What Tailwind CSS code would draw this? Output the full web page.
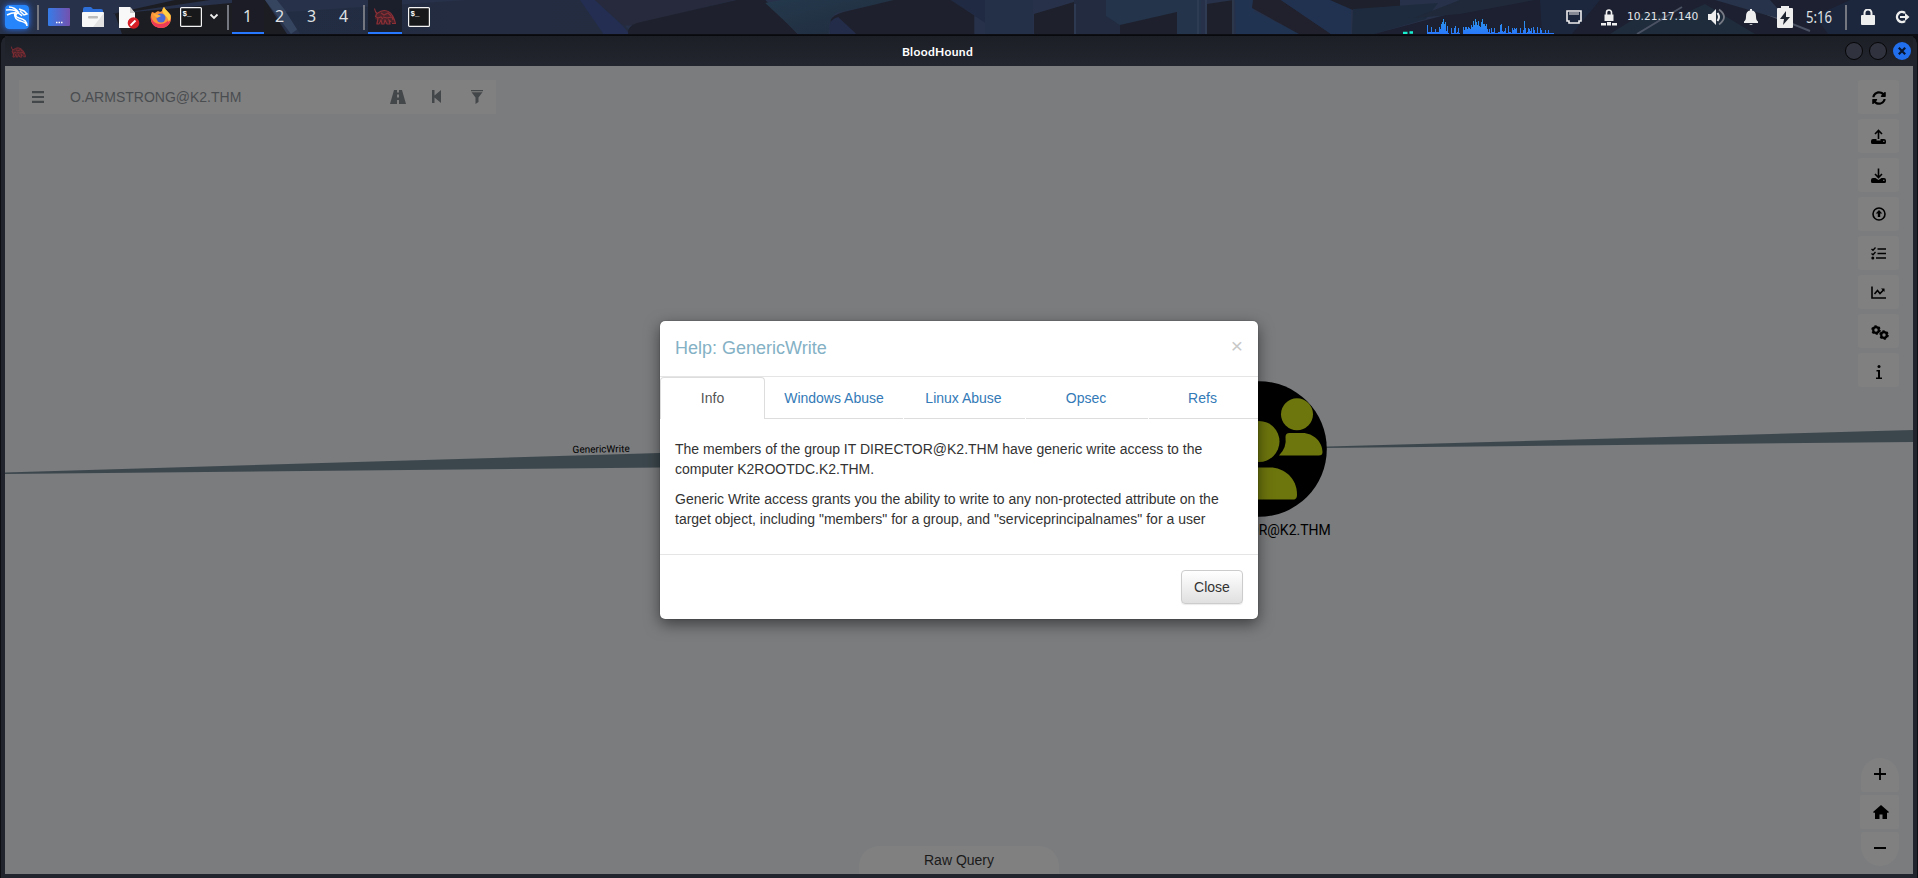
<!DOCTYPE html>
<html lang="en">
<head>
<meta charset="utf-8">
<title>BloodHound</title>
<script src="https://cdn.jsdelivr.net/npm/@tailwindcss/browser@4"></script>
</head>
<body class="w-[1918px] h-[878px] overflow-hidden bg-[#0d0e13] font-['Liberation_Sans',sans-serif] text-sm">
<svg class="hidden">
  <symbol id="hound" viewBox="0 0 22 17"><path d="M1 1.500c1 1.500 1 3 2.500 3.500C5 4 8 2 11 2.500c5 .5 8 5 9.500 9.500l.5 3.500h-3L16 13l-2 3h-3l1-3-2 .5-1 3H6l1-3-2-.5-1 3H2l1-4-2-1 1-4-1-3z" fill="#6d262c" opacity=".55"/><path d="M.5.500Q1 4 3 5.500C5 4 8 2 11 2.500c5 .5 8 5 9.500 9.500l1 3.500h-3.500M2.500 6L1.500 8.500 4 10l3-1 2 2M7 5l3 2 4-2 3 3M9 9l4 1 5-1 1 3M4 10l-1 6h2l2-4 1 4h2l1-4 2 4h3l-1-4 2 2" fill="none" stroke="#8e2f36" stroke-width="1.100"/></symbol>
  <symbol id="term" viewBox="0 0 22 20"><rect x=".6" y=".6" width="20.8" height="18.8" rx="1" fill="#17181a" stroke="#f4f4f4" stroke-width="1.2"/><text x="2.5" y="9" font-family="Liberation Mono" font-weight="bold" font-size="7.5" fill="#fff">$_</text></symbol>
</svg>
<div class="flex flex-col h-full">
  <!-- desktop panel -->
  <header class="relative h-[34px] shrink-0 bg-[#1f2a3f] overflow-hidden">
    <svg class="absolute inset-0" width="1918" height="34">
      <defs><linearGradient id="lg"><stop offset="0" stop-color="#222c42"/><stop offset="1" stop-color="#242c40"/></linearGradient>
      <linearGradient id="cy" x1="0" x2="1" y2="1"><stop offset="0" stop-color="#24394c"/><stop offset="1" stop-color="#202b3d"/></linearGradient></defs>
      <rect width="1918" height="34" fill="#273149"/>
      <path d="M112 14L265 0h-90zM115 14L210 0h55l22 34H122z" fill="#1c1d23"/>
      <path d="M265 0h12l22 28-8 6z" fill="#35445f"/>
      <path d="M300 34L286 12l180-12h140l26 34z" fill="url(#lg)"/>
      <g transform="translate(-32.860) scale(1.0714 1)">
      <path d="M572 0h14l26 26 6 8h-24z" fill="#232e52"/>
      <path d="M586 0h130L625 24q-10 3-14 0z" fill="#272a3c"/>
      <path d="M617 34V30q2-6 12-8L718 0h27l30 34z" fill="#1e212d"/>
      <path d="M745 3L760 0h110l-56 12q-10 2-10 22h-28z" fill="url(#cy)"/>
      <path d="M806 34V20q2-5 12-8L865 0h75v34z" fill="#1e212d"/><path d="M806 34q-4-14 7-17l17 17z" fill="#232c48"/>
      <path d="M918 0h60v34h-12z" fill="#202a42"/>
      </g>
      <path d="M985 0h48v34h-48z" fill="#243048"/>
      <path d="M1034 14l40-12v32h-40z" fill="#1e202b"/>
      <path d="M1074 0h34l9 24h3v10h-46z" fill="#222b40"/>
      <path d="M1106 0h95v34h-24V12l-57 13-14-9z" fill="#24344a"/>
      <path d="M1120 25l57-13v22h-57z" fill="#1e212d"/>
      <path d="M1207 4l27-4v34h-27z" fill="#1e202b"/><path d="M1198 0v34M1206 0v34M1233 0v34M1075 4v30" stroke="#323f57" stroke-width="1.5"/>
      <path d="M1235 0h20l-3 34h-16zM1250 9l50 25h-50z" fill="#203350"/>
      <path d="M1253 0h28l50 34h-32l-47-26z" fill="#20212d"/>
      <path d="M1281 0h50l20 9v25h-20z" fill="#203250"/><path d="M1330 0h70v6l-47 4z" fill="#1e202b"/>
      <path d="M1353 9l85-6-12 16-52 15h-22z" fill="#1e2b3e"/>
      <path d="M1374 34l90-24L1500 0h418v34z" fill="#1d2030"/>
      <path d="M1460 0h75l-75 14-46 4z" fill="#1f293a"/>
      <path d="M1540 0h60l-28 34h-30zM1815 16l35-16h68v34h-90z" fill="#1c273d"/>
      <path d="M1610 34l35-22 30 6 30-14 50 30z" fill="#1f2c3c"/><path d="M1732 0l78 31M1682 7l-45 27" stroke="#4a5263" stroke-width="2"/>
      <path d="M1715 0h55l18 20-22-5z" fill="#26334a"/>
    </svg>
    <div class="relative flex h-full items-center">
      <svg class="ml-[5px] mb-px rounded-sm shadow-[0_0_6px_#2777ff]" width="24" height="24"><rect width="24" height="24" rx="2" fill="#2685fa"/><path d="M1 5c6-1 10 0 13 3M2 10c6-3 12-3 15 1M4 2c5 0 8 3 10 6m-1 0c-3 1-3 4 1 5 5 1 8 3 8 8 0-4-5-4-9-6-4-2-4-6-2-8M15 6l4 4 3-1-3-3-5-2" fill="none" stroke="#fff" stroke-width="1.5"/></svg>
      <i class="ml-2 h-[25px] w-0.5 bg-[#74777f]"></i>
      <svg class="ml-[9px]" width="22" height="18"><defs><linearGradient id="dk"><stop stop-color="#367ce8"/><stop offset="1" stop-color="#7451ae"/></linearGradient></defs><rect width="22" height="18" rx="1" fill="url(#dk)"/><path d="M8 14.5h1.5m1 0H12m1 0h1.5" stroke="#fff" stroke-width="1.5"/></svg>
      <svg class="ml-3" width="22" height="22"><path d="M1 3q0-2 2-2h6l2 2h8q2 0 2 2v4H1z" fill="#2d6fd6"/><rect y="6" width="22" height="15" rx="1" fill="#f7f7f7"/><path d="M22 7v14H11z" fill="#e2e2e2"/><rect x="6" y="10" width="10" height="2.5" rx="1" fill="#bbb"/></svg>
      <svg class="ml-[14px]" width="22" height="23"><path d="M1 1h11l5 6v15H1z" fill="#f8f8f8"/><path d="M12 1v6h5z" fill="#ccc"/><circle cx="15.500" cy="17" r="5.800" fill="#d61f26"/><path d="M12.500 19.500l5-5" stroke="#fff" stroke-width="2"/></svg>
      <svg class="ml-[10px]" width="22" height="23"><path d="M14 1c1 3 5 5 6.500 8 2 6-2 13-9.500 13S-.5 16 1 9c0-1 1-3 1-3l3 1c2-2 4-2 5-1l2-1c0-2 1-3 2-4z" fill="#f9943a"/><path d="M1 9c0 5 4 9 9 9s9-3 10-8c2 6-2 12-9 12S0 17 1 9z" fill="#ed3b57"/><path d="M14 1c1 3 5 5 6.500 8 .5 3 0 5-2 7 0-6-5-6-6-11 0-2 1-3 1.500-4z" fill="#ffcf45"/><circle cx="11" cy="12" r="4.500" fill="#4a6ad7"/><path d="M3 8l6 1 2 1-4 2z" fill="#ffb53d"/></svg>
      <svg class="ml-[8px]" width="22" height="20"><use href="#term"/></svg>
      <svg class="ml-[7px]" width="10" height="8"><path d="M1.500 1.500L5 5l3.500-3.500" fill="none" stroke="#eee" stroke-width="1.800"/></svg>
      <i class="ml-2 h-[25px] w-0.5 bg-[#74777f]"></i>
      <nav class="ml-[3px] flex h-full text-center font-['Noto_Sans',sans-serif] text-[16px] leading-[32px] text-[#dfe1e4]">
        <div class="w-8 border-b-2 border-[#2777ff] bg-[#1b1c25] pr-px">1</div><div class="w-8 pr-px">2</div><div class="w-8 pr-px">3</div><div class="w-8 pr-px">4</div>
      </nav>
      <i class="ml-[3px] h-[25px] w-0.5 bg-[#74777f]"></i>
      <div class="ml-[3px] flex h-full w-[34px] items-center justify-center border-b-2 border-[#2777ff] bg-[#1b1f2c]"><svg width="22" height="17"><use href="#hound"/></svg></div>
      <svg class="ml-[6px]" width="22" height="20"><use href="#term"/></svg>
      <svg class="ml-[973px]" width="155" height="34"><defs><linearGradient id="bg" gradientUnits="userSpaceOnUse" x1="0" y1="18" x2="0" y2="34"><stop stop-color="#2b98e8"/><stop offset="1" stop-color="#2a78fb"/></linearGradient></defs><path d="M0 33h4.500M6.500 32.500h3.500" stroke="#18f0d0" stroke-width="2.500"/>
        <g id="bars" fill="url(#bg)"></g></svg>
      <svg class="ml-[8px]" width="16" height="15"><path d="M1 1h14v10h-2v2H3v-2H1z" fill="none" stroke="#eee" stroke-width="1.600"/><path d="M4 2v3m2-3v3m2-3v3m2-3v3m2-3v3" stroke="#eee"/></svg>
      <svg class="ml-[19px]" width="16" height="17" fill="#eee"><path d="M3.500 5.500h9V12h-9zM0 14h5v2.500H0zM6 13h4v3.500H6zM11 14h5v2.500h-5z"/><path d="M5.500 6V3.500a2.500 2.500 0 015 0V6" fill="none" stroke="#eee" stroke-width="1.600"/></svg>
      <span class="ml-[10px] w-[72px] whitespace-nowrap font-['DejaVu_Sans',sans-serif] text-[10.7px] text-[#e4e6ea]">10.21.17.140</span>
      <svg class="ml-[9px]" width="18" height="18"><path d="M0 6h3l5-5v16l-5-5H0z" fill="#eee"/><path d="M9.500 5q3 4 0 8" fill="none" stroke="#eee" stroke-width="2"/><path d="M11 1.500q10 7.500 0 15" fill="none" stroke="#767a84" stroke-width="1.800"/></svg>
      <svg class="ml-[18px]" width="14" height="16" fill="#eee"><path d="M6 0h2v1.500q4 .5 4 6 0 4 2 5V14H0v-1.500q2-1 2-5 0-5.500 4-6zM5 15h4l-2 1z"/></svg>
      <svg class="ml-[19px]" width="16" height="22"><path d="M4 0h8v2h3q1 0 1 1v18q0 1-1 1H1q-1 0-1-1V3q0-1 1-1h3z" fill="#eee"/><path d="M9 5l-6 8h4l-1 6 7-8H9z" fill="#1e2330"/></svg>
      <span class="ml-[13px] w-[26px] whitespace-nowrap font-['Noto_Sans',sans-serif] text-[16px]"><span class="inline-block origin-left scale-x-[.82] text-[#dfe1e4]">5:16</span></span>
      <i class="ml-[13px] h-[25px] w-0.5 bg-[#74777f]"></i>
      <svg class="ml-[14px]" width="14" height="16"><path d="M1 6h12q1 0 1 1v8q0 1-1 1H1q-1 0-1-1V7q0-1 1-1z" fill="#eee"/><path d="M3.500 7V4a3.500 3.500 0 017 0v3" fill="none" stroke="#eee" stroke-width="2"/></svg>
      <svg class="ml-[20px]" width="15" height="14"><path d="M10 3a5 5 0 100 8" fill="none" stroke="#eee" stroke-width="2.400"/><path d="M5 6h5V3l4.500 4-4.500 4V8H5z" fill="#eee"/></svg>
    </div>
  </header>
  <!-- application window -->
  <main class="mx-px mt-px flex min-h-0 flex-1 flex-col rounded-t-lg border-t border-[#08090c] bg-[#22242d] px-1 pb-1">
    <div class="flex h-[30px] shrink-0 items-center bg-gradient-to-b from-[#1d1f27] to-[#23252e] px-1.5">
      <svg class="mt-px" width="15" height="12"><use href="#hound"/></svg>
      <h1 class="flex-1 pl-[4px] text-center font-['Lato',sans-serif] text-[12px] font-bold leading-[29px] tracking-[.35px] text-white">BloodHound</h1>
      <div class="mr-[-4px] flex gap-[6px]">
        <i class="size-[18px] rounded-full border border-[#050507] bg-[#30333e]"></i>
        <i class="size-[18px] rounded-full border border-[#050507] bg-[#30333e]"></i>
        <svg width="18" height="18"><circle cx="9" cy="9" r="9" fill="#226fed"/><path d="M5.800 5.800l6.400 6.400m0-6.400l-6.400 6.400" stroke="#07152e" stroke-width="2.200"/></svg>
      </div>
    </div>
    <div class="relative min-h-0 flex-1 overflow-hidden bg-[#7a7c7e]">
      <svg class="absolute inset-0" width="1908" height="807" viewBox="5 66 1908 807">
        <path d="M5 472.500L660 453v14.500L5 474z" fill="#3c474d"/>
        <path d="M1320 446.800L1913 430v12l-593 6z" fill="#3c474d"/>
        <text x="572.600" y="453" transform="rotate(-1 572 453)" font-family="Roboto" font-size="10" fill="#000">GenericWrite</text>
        <circle cx="1259" cy="449" r="67.800" fill="#000"/>
        <g fill="#6d760d"><circle cx="1259" cy="441.500" r="20.500"/><circle cx="1297" cy="414.300" r="16"/><circle cx="1221" cy="414.300" r="16"/>
        <path d="M1221 495c0-17 13-27.500 27-27.500h22c14 0 27 10.500 27 27 0 3-1 5-4 5h-68c-3 0-4-1-4-4.500z"/>
        <path d="M1285.500 437q0-4 4-4h13c11 0 20 9 20 19 0 2.500-1 3.500-4 3.500h-39.500q8-8 6.500-18.500z"/></g>
        <text x="1259" y="535" text-anchor="middle" font-family="Roboto" font-size="14" fill="#000">IT DIRECTOR@K2.THM</text>
      </svg>
      <div class="absolute left-[14px] top-[14px] flex h-[34px] w-[477px] items-center bg-[#808080] text-[#4a4d50]">
        <svg class="ml-[13px] mb-px" width="12" height="12"><path d="M0 1.200h12M0 6h12M0 10.800h12" stroke="#44474a" stroke-width="2.200"/></svg>
        <span class="ml-[26px] w-[320px]">O.ARMSTRONG@K2.THM</span>
        <svg class="mb-px" width="16" height="14" fill="#44474a"><path d="M4 0h3v2.500h2V0h3l4 14H9v-4H7v4H0zM7 4.500v3h2v-3z" fill-rule="evenodd"/></svg>
        <svg class="ml-[26px] mb-px" width="9" height="13" fill="#44474a"><path d="M0 0h2.500v5.500L9 0v13L2.500 7.500V13H0z"/></svg>
        <svg class="ml-[30px] mb-px" width="12" height="14" fill="#44474a"><path d="M0 0h12v1.200H0zM.5 2.200h11L7.500 7.500V12L4.500 14V7.500z"/></svg>
      </div>
      <div class="absolute right-[14px] top-[14px] flex flex-col gap-[5px] [&>div]:flex [&>div]:h-[34px] [&>div]:w-[41px] [&>div]:items-center [&>div]:justify-center [&>div]:rounded-[3px] [&>div]:bg-[#808080]">
        <div><svg class="mt-0.5" width="14" height="14" viewBox="0 0 512 512"><path d="M370.700 133.300C339.500 104 298.900 88 255.800 88c-77.500.1-144.300 53.200-162.800 126.900-1.300 5.400-6.100 9.100-11.700 9.100H24.100c-7.500 0-13.200-6.800-11.800-14.200C33.900 94.900 134.800 8 256 8c66.400 0 126.800 26.100 171.300 68.700L463 41c15.100-15.100 41-4.400 41 17v134c0 13.300-10.700 24-24 24H346c-21.400 0-32.100-25.900-17-41zM32 296h134c21.400 0 32.100 25.900 17 41l-41.800 41.800c31.300 29.300 71.800 45.300 114.900 45.200 77.400-.1 144.300-53.100 162.800-126.800 1.300-5.400 6.100-9.100 11.700-9.100h57.300c7.500 0 13.200 6.800 11.800 14.200C478.100 417.100 377.200 504 256 504c-66.400 0-126.800-26.100-171.300-68.700L49 471c-15.100 15.100-41 4.400-41-17V320c0-13.300 10.700-24 24-24z"/></svg></div>
        <div><svg class="mt-px" width="15" height="15"><path d="M7.500 10V1.500M4 5l3.500-3.500L11 5" fill="none" stroke="#000" stroke-width="1.600"/><path d="M0 12q0-2 2-2h3.500v1.500h4V10H13q2 0 2 2v1.500q0 1.500-1.500 1.500h-12Q0 15 0 13.500z"/><path d="M12 12.300h1.500" stroke="#808080"/></svg></div>
        <div><svg class="mt-px" width="15" height="15"><path d="M7.500 .5V9M4 6l3.500 3.500L11 6" fill="none" stroke="#000" stroke-width="1.600"/><path d="M0 12q0-2 2-2h2.500l3 2 3-2H13q2 0 2 2v1.500q0 1.500-1.500 1.500h-12Q0 15 0 13.500z"/><path d="M12 12.300h1.500" stroke="#808080"/></svg></div>
        <div><svg width="14" height="14"><circle cx="7" cy="7" r="6" fill="none" stroke="#000" stroke-width="1.600"/><path d="M7 3l3.300 3.500H8.200V10H5.800V6.500H3.700z"/></svg></div>
        <div><svg class="mt-px" width="15" height="13"><path d="M6.500 2H15M6.500 6.500H15M5 11h10" stroke="#000" stroke-width="1.600"/><path d="M.5 2l1.500 1.300L4.500.5M.5 6.500L2 7.800 4.500 5" fill="none" stroke="#000" stroke-width="1.300"/><circle cx="1.800" cy="11" r="1.500"/></svg></div>
        <div><svg class="mt-px" width="15" height="13"><path d="M1 .5V12h14M3.500 8L6.500 4.500l2.500 3L13 3.500" fill="none" stroke="#000" stroke-width="1.600"/><path d="M10 2.500h3.500V6z"/></svg></div>
        <div><svg class="ml-[3px] mt-0.5" width="18" height="15"><circle cx="5" cy="5" r="2.800" fill="none" stroke="#000" stroke-width="2.200"/><circle cx="5" cy="5" r="4" fill="none" stroke="#000" stroke-width="1.600" stroke-dasharray="2.200 2"/><circle cx="13" cy="10" r="2.800" fill="none" stroke="#000" stroke-width="2.200"/><circle cx="13" cy="10" r="4" fill="none" stroke="#000" stroke-width="1.600" stroke-dasharray="2.200 2"/></svg></div>
        <div><svg class="mt-[3px]" width="6" height="14"><circle cx="3" cy="1.500" r="1.500"/><path d="M.5 5h3.500v7.500H6V14H0v-1.500h2v-6H.5z"/></svg></div>
      </div>
      <div class="absolute bottom-2 right-[14px] flex flex-col items-end gap-[3px] [&>div]:flex [&>div]:h-[34px] [&>div]:items-center [&>div]:justify-center [&>div]:bg-[#808080]">
        <div class="w-[38px] rounded-t-[19px] rounded-b-[2px]"><svg class="mb-0.5" width="12" height="12"><path d="M6 0v12M0 6h12" stroke="#000" stroke-width="1.800"/></svg></div>
        <div class="w-[39px] rounded-[2px]"><svg class="ml-[3px]" width="16" height="14"><path d="M8 0l8 7-1 1-1-.5V14h-4.500V9.500h-3V14H2V7.500L1 8 0 7z"/></svg></div>
        <div class="w-[38px] rounded-b-[19px] rounded-t-[2px]"><svg class="mb-0.5" width="12" height="2"><path d="M0 1h12" stroke="#000" stroke-width="2"/></svg></div>
      </div>
      <div class="absolute bottom-0 left-[854px] h-7 w-[200px] rounded-t-[20px] bg-[#808080] text-center leading-[28px] text-[#1a1a1a]">Raw Query</div>
      <!-- dialog -->
      <section class="absolute left-[655px] top-[255px] h-[298px] w-[598px] rounded-[5px] bg-white text-[#333] shadow-[0_5px_15px_rgba(0,0,0,.5),0_0_1px_rgba(0,0,0,.7)]">
        <div class="flex h-[56px] justify-between border-b border-[#e5e5e5] px-[15px]">
          <h2 class="pt-[15px] text-[18px] leading-[25px] text-[#84b1c5]">Help: GenericWrite</h2>
          <span class="pt-[14px] text-[21px] font-normal leading-[21px] text-[#c8c8c8]">×</span>
        </div>
        <div class="flex h-[42px] text-center leading-[40px] text-[#337ab7]">
          <div class="w-[105px] rounded-t border border-b-0 border-[#ddd] text-[#555]">Info</div>
          <div class="w-[138px] border-b border-[#ddd] pt-px">Windows Abuse</div>
          <div class="ml-px w-[121px] border-b border-[#ddd] pt-px pr-0.5">Linux Abuse</div>
          <div class="ml-px w-[122px] border-b border-[#ddd] pt-px pr-0.5">Opsec</div>
          <div class="ml-px flex-1 border-b border-[#ddd] pt-px pr-0.5">Refs</div>
        </div>
        <div class="h-[135px] px-[15px] pt-5 leading-5">
          <p>The members of the group IT DIRECTOR@K2.THM have generic write access to the<br>computer K2ROOTDC.K2.THM.</p>
          <p class="mt-[10px]">Generic Write access grants you the ability to write to any non-protected attribute on the<br>target object, including "members" for a group, and "serviceprincipalnames" for a user</p>
        </div>
        <div class="flex justify-end border-t border-[#e5e5e5] p-[15px]"><button class="h-[34px] w-[62px] rounded border border-[#ccc] bg-gradient-to-b from-white to-[#e0e0e0] shadow-[0_1px_1px_rgba(0,0,0,.08)]">Close</button></div>
      </section>
    </div>
  </main>
</div>
<script>
  const h = [9,2,2,2,7,2,2,2,5,2,2,2,7,5,10,12,15,10,12,3,8,1,0,0,6,1,1,6,8,1,2,6,1,0,0,0,7,4,7,7,5,7,6,5,9,7,13,9,15,12,9,13,8,7,12,15,10,10,8,10,5,2,5,1,6,2,2,6,1,1,1,2,2,9,10,3,2,3,6,1,1,8,2,2,1,6,4,6,5,6,1,1,1,6,1,1,4,13,6,1,2,6,5,3,6,1,7,4,1,1,7,1,1,6,4,1,1,1,4,1,1,4,1,1,1,1,1];
  const g = document.getElementById('bars');
  h.forEach((v, i) => {
    const r = document.createElementNS('http://www.w3.org/2000/svg', 'rect');
    r.setAttribute('x', 24 + i); r.setAttribute('y', 34 - v);
    r.setAttribute('width', 1); r.setAttribute('height', v);
    g.appendChild(r);
  });
</script>
</body>
</html>
